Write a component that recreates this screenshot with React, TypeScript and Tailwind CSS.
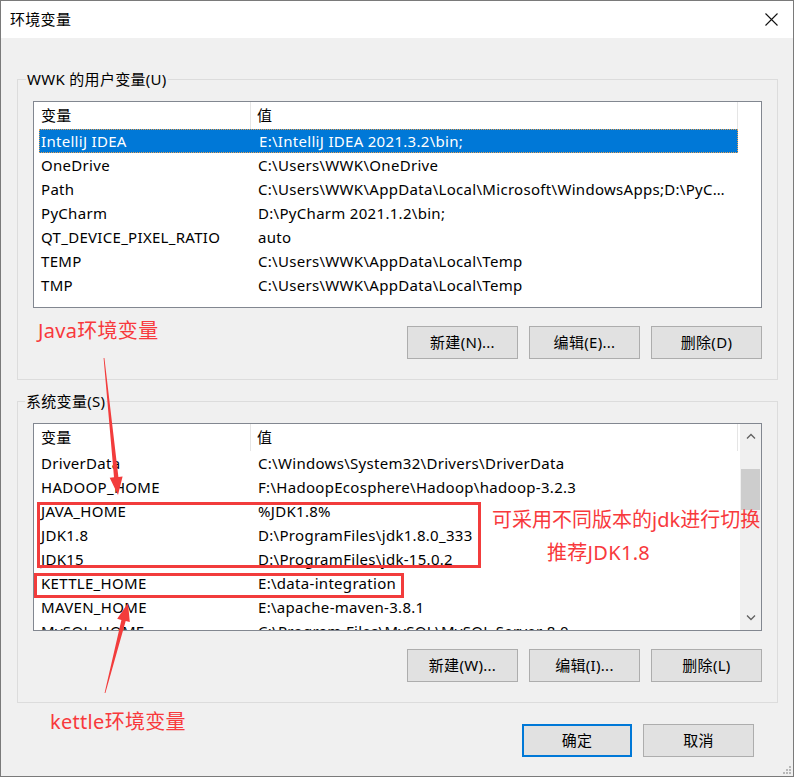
import React from 'react';

type EnvVar = { name: string; value: string };

const userVars: EnvVar[] = [
  { name: 'IntelliJ IDEA', value: 'E:\\IntelliJ IDEA 2021.3.2\\bin;' },
  { name: 'OneDrive', value: 'C:\\Users\\WWK\\OneDrive' },
  { name: 'Path', value: 'C:\\Users\\WWK\\AppData\\Local\\Microsoft\\WindowsApps;D:\\PyCharm 2021.1.2\\bin;' },
  { name: 'PyCharm', value: 'D:\\PyCharm 2021.1.2\\bin;' },
  { name: 'QT_DEVICE_PIXEL_RATIO', value: 'auto' },
  { name: 'TEMP', value: 'C:\\Users\\WWK\\AppData\\Local\\Temp' },
  { name: 'TMP', value: 'C:\\Users\\WWK\\AppData\\Local\\Temp' },
];

const systemVars: EnvVar[] = [
  { name: 'DriverData', value: 'C:\\Windows\\System32\\Drivers\\DriverData' },
  { name: 'HADOOP_HOME', value: 'F:\\HadoopEcosphere\\Hadoop\\hadoop-3.2.3' },
  { name: 'JAVA_HOME', value: '%JDK1.8%' },
  { name: 'JDK1.8', value: 'D:\\ProgramFiles\\jdk1.8.0_333' },
  { name: 'JDK15', value: 'D:\\ProgramFiles\\jdk-15.0.2' },
  { name: 'KETTLE_HOME', value: 'E:\\data-integration' },
  { name: 'MAVEN_HOME', value: 'E:\\apache-maven-3.8.1' },
  { name: 'MySQL_HOME', value: 'C:\\Program Files\\MySQL\\MySQL Server 8.0' },
];

// 꼬리는 가늘고 머리 쪽으로 굵어지는 빨간 화살표
function arrowPoints(tx: number, ty: number, hx: number, hy: number) {
  const dx = hx - tx;
  const dy = hy - ty;
  const len = Math.hypot(dx, dy);
  const ux = dx / len;
  const uy = dy / len;
  const nx = -uy;
  const ny = ux;
  const bx = hx - ux * 18;
  const by = hy - uy * 18;
  const p = (x: number, y: number) => `${x.toFixed(1)},${y.toFixed(1)}`;
  return [
    p(tx + nx * 0.4, ty + ny * 0.4),
    p(bx + nx * 2.2, by + ny * 2.2),
    p(bx + nx * 6.5, by + ny * 6.5),
    p(hx, hy),
    p(bx - nx * 6.5, by - ny * 6.5),
    p(bx - nx * 2.2, by - ny * 2.2),
    p(tx - nx * 0.4, ty - ny * 0.4),
  ].join(' ');
}

function WinButton({ label, primary }: { label: string; primary?: boolean }) {
  return (
    <div
      className={
        primary
          ? 'w-[110px] h-[33px] flex items-center justify-center bg-[#e1e1e1] border-2 border-[#0078d7] text-[15px] text-black'
          : 'w-[111px] h-[33px] flex items-center justify-center bg-[#e1e1e1] border border-[#adadad] text-[15px] text-black'
      }
    >
      {label}
    </div>
  );
}

function ListHeader() {
  return (
    <div className="flex h-[27px] items-center pl-[5px] text-[15px]">
      <div className="w-[212px] h-full flex items-center pl-[2px] border-r border-[#e5e5e5]">变量</div>
      <div className="w-[487px] h-full flex items-center pl-[6px] border-r border-[#e5e5e5]">值</div>
    </div>
  );
}

function Row({ v, selected }: { v: EnvVar; selected?: boolean }) {
  return (
    <div className="pl-[5px]">
      <div
        className={
          selected
            ? 'flex w-[699px] h-[24px] items-center bg-[#0078d7] text-white border border-dotted border-[#e8a050]'
            : 'flex w-[699px] h-[24px] items-center text-black'
        }
      >
        <div className={selected ? 'w-[212px] pl-[1px] whitespace-nowrap overflow-hidden' : 'w-[212px] pl-[2px] whitespace-nowrap overflow-hidden'}>
          {v.name}
        </div>
        <div className="w-[480px] pl-[7px] whitespace-nowrap overflow-hidden text-ellipsis">{v.value}</div>
      </div>
    </div>
  );
}

function Chevron({ up }: { up?: boolean }) {
  return (
    <svg width="10" height="6" viewBox="0 0 10 6" className="block">
      <path d={up ? 'M1 5.5 L5 1.5 L9 5.5' : 'M1 0.5 L5 4.5 L9 0.5'} fill="none" stroke="#606060" strokeWidth="1.3" />
    </svg>
  );
}

export default function App() {
  return (
    <div
      className="relative w-[794px] h-[777px] border border-[#7a7a7a] bg-[#f0f0f0] overflow-hidden text-[15px] tracking-[0.3px] text-black"
      style={{ fontFamily: "'Noto Sans', 'Noto Sans CJK SC', sans-serif" }}
    >
      {/* 타이틀 바 */}
      <div className="h-[37px] bg-white flex items-center justify-between pl-[9px] pr-[15px]">
        <span className="leading-none">环境变量</span>
        <svg width="13" height="13" viewBox="0 0 13 13">
          <path d="M0.5 0.5 L12.5 12.5 M12.5 0.5 L0.5 12.5" stroke="#111" strokeWidth="1.1" />
        </svg>
      </div>

      <div className="pl-[16px]">
        {/* 사용자 변수 */}
        <div className="relative mt-[41px] w-[761px] h-[301px] border border-[#dcdcdc] pt-[21px] pl-[15px]">
          <span className="absolute left-[8px] -top-[11px] px-[1px] leading-[20px] bg-[#f0f0f0]">WWK 的用户变量(U)</span>
          <div className="w-[729px] h-[207px] border border-[#828790] bg-white overflow-hidden">
            <ListHeader />
            {userVars.map((v, i) => (
              <Row key={v.name} v={v} selected={i === 0} />
            ))}
          </div>
          <div className="mt-[18px] flex justify-end gap-[11px] pr-[15px]">
            <WinButton label="新建(N)..." />
            <WinButton label="编辑(E)..." />
            <WinButton label="删除(D)" />
          </div>
        </div>

        {/* 시스템 변수 */}
        <div className="relative mt-[21px] w-[761px] h-[302px] border border-[#dcdcdc] pt-[21px] pl-[15px]">
          <span className="absolute left-[7px] -top-[11px] px-[1px] leading-[20px] bg-[#f0f0f0]">系统变量(S)</span>
          <div className="flex w-[729px] h-[208px] border border-[#828790] bg-white overflow-hidden">
            <div className="w-[706px] overflow-hidden">
              <ListHeader />
              {systemVars.map((v) => (
                <Row key={v.name} v={v} />
              ))}
            </div>
            <div className="w-[21px] h-full bg-[#f0f0f0] flex flex-col items-center">
              <div className="h-[24px] flex items-center justify-center">
                <Chevron up />
              </div>
              <div className="mt-[21px] w-[19px] h-[41px] bg-[#cdcdcd]" />
              <div className="mt-auto h-[24px] flex items-center justify-center">
                <Chevron />
              </div>
            </div>
          </div>
          <div className="mt-[18px] flex justify-end gap-[11px] pr-[15px]">
            <WinButton label="新建(W)..." />
            <WinButton label="编辑(I)..." />
            <WinButton label="删除(L)" />
          </div>
        </div>
      </div>

      <div className="mt-[21px] flex justify-end gap-[11px] pr-[39px]">
        <WinButton label="确定" primary />
        <WinButton label="取消" />
      </div>

      {/* 크기 조절 그립 */}
      <svg className="absolute right-[1px] bottom-[1px]" width="11" height="11" viewBox="0 0 11 11">
        <rect x="8" y="2" width="2" height="2" fill="#b8b8b8" />
        <rect x="5" y="5" width="2" height="2" fill="#b8b8b8" />
        <rect x="8" y="5" width="2" height="2" fill="#b8b8b8" />
        <rect x="2" y="8" width="2" height="2" fill="#b8b8b8" />
        <rect x="5" y="8" width="2" height="2" fill="#b8b8b8" />
        <rect x="8" y="8" width="2" height="2" fill="#b8b8b8" />
      </svg>

      {/* 빨간 주석 레이어 */}
      <div className="absolute left-[36px] top-[501px] w-[444px] h-[66px] border-[3px] border-[#f23c3c]" />
      <div className="absolute left-[33px] top-[572px] w-[370px] h-[25px] border-[3px] border-[#f23c3c]" />

      <span className="absolute left-[37px] top-[316px] text-[20px] leading-[28px] text-[#f8393c]">Java环境变量</span>
      <span className="absolute left-[491px] top-[505px] text-[20px] leading-[28px] tracking-normal text-[#f8393c]">可采用不同版本的jdk进行切换</span>
      <span className="absolute left-[546px] top-[538px] text-[20px] leading-[28px] text-[#f8393c]">推荐JDK1.8</span>
      <span className="absolute left-[49px] top-[707px] text-[20px] leading-[28px] text-[#f8393c]">kettle环境变量</span>

      <svg className="absolute left-0 top-0 pointer-events-none" width="794" height="777">
        <polygon points={arrowPoints(103, 357, 117, 494)} fill="#f23c3c" />
        <polygon points={arrowPoints(104, 692, 127, 602)} fill="#f23c3c" />
      </svg>
    </div>
  );
}
